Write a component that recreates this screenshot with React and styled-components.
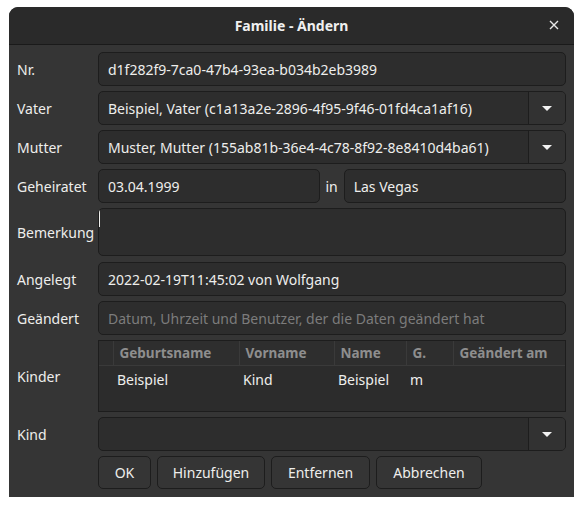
import React from 'react';
import styled, { createGlobalStyle } from 'styled-components';

// global page reset
const GlobalStyle = createGlobalStyle`
  body {
    margin: 0;
    background: #ffffff;
    font-family: "Noto Sans", "Open Sans", sans-serif;
  }
`;

const Window = styled.div`
  margin: 7px 0 0 9px;
  width: 565px;
  height: 490px;
  background: #353535;
  border-radius: 9px 9px 0 0;
  overflow: hidden;
  color: #eeeeec;
  font-size: 14px;
`;

const TitleBar = styled.div`
  position: relative;
  height: 37px;
  background: #2a2a2a;
  border-bottom: 1px solid #1a1a1a;
  display: flex;
  align-items: center;
  justify-content: center;
`;

const Title = styled.div`
  font-weight: 700;
  font-size: 14px;
  color: #f0f0f0;
`;

const CloseButton = styled.div`
  position: absolute;
  right: 14px;
  top: 12px;
  width: 12px;
  height: 12px;
  display: flex;
  align-items: center;
  justify-content: center;
`;

const Body = styled.div`
  padding: 7px 8px 0 8px;
  display: grid;
  grid-template-columns: 76px 1fr;
  column-gap: 5px;
`;

const Label = styled.div`
  display: flex;
  align-items: center;
  height: ${(p) => p.h || 34}px;
  margin-bottom: ${(p) => p.mb ?? 5}px;
  white-space: nowrap;
`;

const Field = styled.div`
  box-sizing: border-box;
  height: ${(p) => p.h || 34}px;
  margin-bottom: ${(p) => p.mb ?? 5}px;
  background: #2d2d2d;
  border: 1px solid #1d1d1d;
  border-radius: 5px;
  padding-left: 9px;
  display: flex;
  align-items: ${(p) => (p.top ? 'flex-start' : 'center')};
  color: ${(p) => (p.placeholder ? '#7c7c7c' : '#eeeeec')};
  white-space: nowrap;
  overflow: hidden;
  flex: ${(p) => (p.grow ? 1 : 'none')};
`;

const Cursor = styled.span`
  display: block;
  width: 1px;
  height: 18px;
  background: #eeeeec;
  margin-left: -9px;
`;

const Combo = styled(Field)`
  padding-left: 0;
`;

const ComboText = styled.div`
  flex: 1;
  padding-left: 9px;
`;

const ComboButton = styled.div`
  width: 36px;
  height: 100%;
  border-left: 1px solid #1d1d1d;
  background: #323232;
  display: flex;
  align-items: center;
  justify-content: center;
`;

const Arrow = styled.div`
  width: 0;
  height: 0;
  border-left: 5px solid transparent;
  border-right: 5px solid transparent;
  border-top: 5px solid #f2f2f2;
`;

const SplitRow = styled.div`
  display: flex;
  align-items: center;
  margin-bottom: 5px;
`;

const InLabel = styled.div`
  padding: 0 6px 0 5px;
`;

const TableBox = styled.div`
  box-sizing: border-box;
  height: 72px;
  margin-bottom: 5px;
  background: #2c2c2c;
  border: 1px solid #1d1d1d;
  overflow: hidden;
`;

const Table = styled.table`
  width: 100%;
  border-collapse: collapse;
  table-layout: fixed;
`;

const HeadCell = styled.th`
  height: 24px;
  padding: 0 0 0 6px;
  text-align: left;
  font-weight: 700;
  font-size: 13.5px;
  color: #8e8e8e;
  background: #2e2e2e;
  border-right: 1px solid #3a3a3a;
  border-bottom: 1px solid #3a3a3a;
  white-space: nowrap;
  overflow: hidden;
  &:last-child {
    border-right: none;
  }
`;

const Cell = styled.td`
  height: 26px;
  padding: 0 0 0 4px;
  white-space: nowrap;
`;

const ButtonRow = styled.div`
  display: flex;
  gap: 6px;
`;

const Button = styled.button`
  box-sizing: border-box;
  height: 33px;
  width: ${(p) => p.w}px;
  background: #353535;
  border: 1px solid #1d1d1d;
  border-radius: 5px;
  color: #eeeeec;
  font-family: inherit;
  font-size: 14px;
  padding: 0;
`;

function ComboBox({ value }) {
  return (
    <Combo>
      <ComboText>{value}</ComboText>
      <ComboButton>
        <Arrow />
      </ComboButton>
    </Combo>
  );
}

export default function App() {
  return (
    <>
      <GlobalStyle />
      <Window>
        <TitleBar>
          <Title>Familie - Ändern</Title>
          <CloseButton>
            <svg width="10" height="10" viewBox="0 0 10 10">
              <path d="M1 1 L9 9 M9 1 L1 9" stroke="#e8e8e8" strokeWidth="1.4" />
            </svg>
          </CloseButton>
        </TitleBar>
        <Body>
          <Label>Nr.</Label>
          <Field>d1f282f9-7ca0-47b4-93ea-b034b2eb3989</Field>

          <Label>Vater</Label>
          <ComboBox value="Beispiel, Vater (c1a13a2e-2896-4f95-9f46-01fd4ca1af16)" />

          <Label>Mutter</Label>
          <ComboBox value="Muster, Mutter (155ab81b-36e4-4c78-8f92-8e8410d4ba61)" />

          <Label>Geheiratet</Label>
          <SplitRow>
            <Field grow mb={0}>03.04.1999</Field>
            <InLabel>in</InLabel>
            <Field grow mb={0}>Las Vegas</Field>
          </SplitRow>

          <Label h={48} mb={6}>Bemerkung</Label>
          <Field h={48} mb={6} top>
            <Cursor />
          </Field>

          <Label>Angelegt</Label>
          <Field>2022-02-19T11:45:02 von Wolfgang</Field>

          <Label>Geändert</Label>
          <Field placeholder="true">Datum, Uhrzeit und Benutzer, der die Daten geändert hat</Field>

          <Label h={72}>Kinder</Label>
          <TableBox>
            <Table>
              <colgroup>
                <col style={{ width: 14 }} />
                <col style={{ width: 126 }} />
                <col style={{ width: 95 }} />
                <col style={{ width: 72 }} />
                <col style={{ width: 47 }} />
                <col />
              </colgroup>
              <thead>
                <tr>
                  <HeadCell />
                  <HeadCell>Geburtsname</HeadCell>
                  <HeadCell>Vorname</HeadCell>
                  <HeadCell>Name</HeadCell>
                  <HeadCell>G.</HeadCell>
                  <HeadCell>Geändert am</HeadCell>
                </tr>
              </thead>
              <tbody>
                <tr>
                  <Cell />
                  <Cell>Beispiel</Cell>
                  <Cell>Kind</Cell>
                  <Cell>Beispiel</Cell>
                  <Cell>m</Cell>
                  <Cell />
                </tr>
              </tbody>
            </Table>
          </TableBox>

          <Label>Kind</Label>
          <ComboBox value="" />

          <div />
          <ButtonRow>
            <Button w={53}>OK</Button>
            <Button w={108}>Hinzufügen</Button>
            <Button w={99}>Entfernen</Button>
            <Button w={106}>Abbrechen</Button>
          </ButtonRow>
        </Body>
      </Window>
    </>
  );
}
